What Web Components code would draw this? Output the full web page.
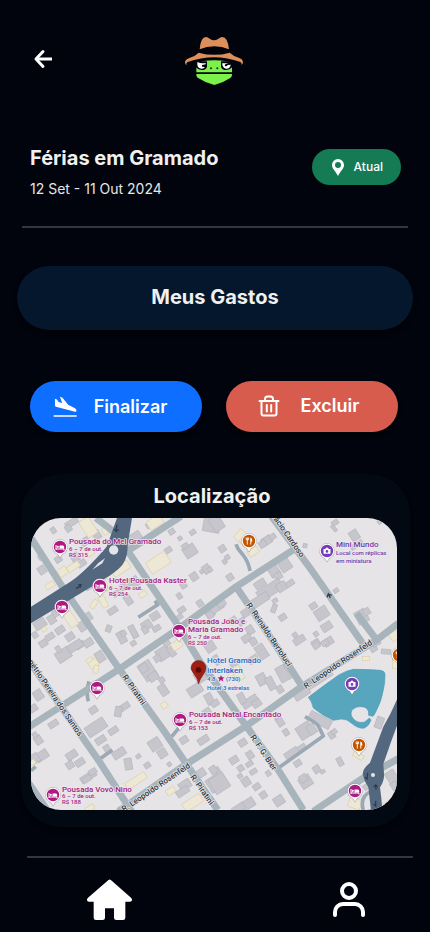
<!DOCTYPE html>
<html lang="pt-BR">
<head>
<meta charset="utf-8">
<meta name="viewport" content="width=device-width, initial-scale=1">
<title>Férias em Gramado</title>
<style>
  html, body { margin: 0; background: #01040d; }
  body { font-family: Inter, "Liberation Sans", sans-serif; color: #f0f0f0; }
</style>
</head>
<body>
<trip-page>
  <trip-header slot="header"></trip-header>
  <trip-summary>
    <span slot="title">Férias em Gramado</span>
    <span slot="dates">12 Set - 11 Out 2024</span>
    <status-badge slot="status">Atual</status-badge>
  </trip-summary>
  <wide-button>Meus Gastos</wide-button>
  <trip-actions>
    <action-button tone="primary">
      <svg slot="icon" width="24" height="24" viewBox="160 436 73 66" fill="#fff" aria-hidden="true"><path d="M166 444l6 2 5 8 11 3-7-19 8 3 17 21 21 11q6 4 4 9-2 3-7 1l-55-15-3-2zM162 494h70v5h-70z"/></svg>
      Finalizar
    </action-button>
    <action-button tone="danger">
      <svg slot="icon" width="24" height="24" viewBox="0 0 24 24" fill="none" stroke="#fff" stroke-width="2" stroke-linecap="round" stroke-linejoin="round" aria-hidden="true"><path d="M2.500 7h19M4.500 7v12.500a2 2 0 0 0 2 2h11a2 2 0 0 0 2-2V7M8 6.500V5a2.500 2.500 0 0 1 2.500-2.500h3A2.500 2.500 0 0 1 16 5v1.500M9.800 11v6.500M14.200 11v6.500"/></svg>
      Excluir
    </action-button>
  </trip-actions>
  <location-card>
    <span slot="title">Localização</span>
    <city-map></city-map>
  </location-card>
  <tab-bar slot="footer"></tab-bar>
</trip-page>

<script>
const define = (name, html, setup) => customElements.define(name, class extends HTMLElement {
  constructor() {
    super();
    const t = document.createElement('template');
    t.innerHTML = html;
    this.attachShadow({ mode: 'open' }).append(t.content.cloneNode(true));
    if (setup) setup(this.shadowRoot);
  }
});

define('trip-page', `
<style>
  :host { display: flex; flex-direction: column; min-height: 100vh; }
  main { display: flex; flex-direction: column; }
  footer { margin-top: auto; }
</style>
<slot name="header"></slot>
<main><slot></slot></main>
<footer><slot name="footer"></slot></footer>`);

define('trip-header', `
<style>
  :host { display: grid; grid-template-columns: 1fr auto 1fr; align-items: center; padding: 36px 32px 0 30px; }
  button { justify-self: start; display: flex; padding: 0 0 2px; border: 0; background: none; cursor: pointer; }
  svg { display: block; }
</style>
<button aria-label="Voltar">
  <svg width="26" height="26" viewBox="0 0 26 26" fill="none" stroke="#fff" stroke-width="3"><path d="M22 12H6" /><path d="M13 4.500L6 12l7 7.500" stroke-linejoin="round" stroke-linecap="round"/></svg>
</button>
<svg width="60" height="50" viewBox="6 6 180 150" role="img" aria-label="Sapo com chapéu">
  <path fill="#7cf04b" d="M60 82q36-6 74 0l16 20v13H43v-13z"/>
  <path fill="#7cf04b" d="M43 120h107q1 7-4 11-24 16-49 22-25-6-50-22-5-4-4-11z"/>
  <path fill="#01040d" d="M41 82h34v16q-3 10-16 10-15-1-18-12zM117 82h34v14q-3 11-18 12-13 0-16-10z"/>
  <path fill="#fff" d="M46 84q12 6 25 3v4l-11 2v5l9 1q-4 6-11 5-11-2-12-12zM146 84q-12 6-25 3v6q3 11 13 11 11-1 12-12l-9 1q-3 5-8 3-2-3 1-5z"/>
  <circle cx="87" cy="103" r="3" fill="#12310c"/><circle cx="106" cy="103" r="3" fill="#12310c"/>
  <path fill="#dc8f5b" d="M53 46Q56 9 72 9q6 0 11 5 7 5 13 5t13-5q6-5 12-5 16 0 20 37-21-9-44-9t-44 9z"/>
  <path fill="#dc8f5b" d="M9 82q4-8 13-10 16-4 28-16 47 13 93 0 13 12 29 16 10 3 11 12 1 5-5 9 3-6-3-9-78-28-158 0-6 3-3 9-6-3-5-11z"/>
</svg>`);

define('status-badge', `
<style>
  :host { display: flex; align-items: center; gap: 8px; height: 36px; padding: 0 18px; border-radius: 18px; background: #147b55; color: #fff; font-size: 12px; font-weight: 500; line-height: 16px; box-sizing: border-box; }
</style>
<svg width="16" height="18" viewBox="0 0 16 18" aria-hidden="true"><path fill="#fff" fill-rule="evenodd" d="M8 1a6 6 0 0 0-6 6c0 4 4 6.500 6 11 2-4.500 6-7 6-11a6 6 0 0 0-6-6zm0 3a3 3 0 1 1 0 6 3 3 0 0 1 0-6z"/></svg>
<slot></slot>`);

define('trip-summary', `
<style>
  :host { display: flex; justify-content: space-between; align-items: flex-start; margin: 58px 22px 0; padding: 0 7px 27px 8px; border-bottom: 2px solid #33363e; }
  h1 { margin: 0; font-size: 20px; line-height: 28px; font-weight: 700; }
  p { margin: 7px 0 0; font-size: 14px; line-height: 20px; font-weight: 400; color: #e6e6e6; }
  ::slotted(status-badge) { margin-top: 5px; }
</style>
<div><h1><slot name="title"></slot></h1><p><slot name="dates"></slot></p></div>
<slot name="status"></slot>`);

define('wide-button', `
<style>
  :host { display: block; margin: 38px 17px 0; }
  button { display: block; width: 100%; height: 64px; padding: 0 0 2px; border: 0; border-radius: 32px; background: #05172d; box-shadow: 0 4px 4px #0008; color: #f0f0f0; font: 700 20px/28px Inter, sans-serif; cursor: pointer; }
</style>
<button><slot></slot></button>`);

define('trip-actions', `
<style>
  :host { display: grid; grid-template-columns: 1fr 1fr; gap: 24px; margin: 51px 32px 0 30px; }
</style>
<slot></slot>`);

define('action-button', `
<style>
  :host { display: block; }
  button { display: flex; align-items: center; justify-content: center; gap: 17px; width: 100%; height: 51px; padding: 0 12px 0 0; border: 0; border-radius: 26px; background: #0d6eff; box-shadow: 0 4px 4px #0008; color: #fff; font: 600 18px/24px Inter, sans-serif; cursor: pointer; }
  :host([tone=danger]) button { background: #d85c4d; gap: 20px; padding: 0 8px 2px 0; }
</style>
<button><slot name="icon"></slot><span><slot></slot></span></button>`);

define('location-card', `
<style>
  :host { display: block; margin: 42px 20px 0 21px; padding: 8px 13px 17px 10px; border-radius: 40px; background: #020913; box-shadow: 0 4px 4px #0006; }
  h2 { margin: 0 0 8px; padding-right: 4px; text-align: center; font-size: 20px; line-height: 28px; font-weight: 700; }
</style>
<h2><slot name="title"></slot></h2>
<slot></slot>`);

define('tab-bar', `
<style>
  :host { display: block; margin: 0 17px 0 27px; border-top: 2px solid #33363e; }
  nav { display: flex; justify-content: space-between; align-items: center; padding: 20px 48px 10px 59px; }
  a { display: block; } svg { display: block; }
</style>
<nav>
  <a href="#inicio" aria-label="Início"><svg width="47" height="44" viewBox="258 114 141 132"><path fill="#fff" d="M322 123q7-9 14 0l57 50q4 4 3 8-1 4-6 4h-14v48q0 7-7 7h-20q-7 0-7-7v-28h-27v28q0 7-7 7h-20q-7 0-7-7v-48h-14q-5 0-6-4-1-4 3-8z"/></svg></a>
  <a href="#perfil" aria-label="Perfil"><svg width="32" height="36" viewBox="0 0 32 36" fill="none" stroke="#fff" stroke-width="4" stroke-linecap="round"><circle cx="16" cy="9" r="7"/><path d="M2 33v-3a8 8 0 0 1 8-8h12a8 8 0 0 1 8 8v3"/></svg></a>
</nav>`);

/* Buildings per map tile: centre x, centre y, width, height, optional angle. */
const TILES = [
  { at: [-33, -144], grey: [
    [100,181,14,18],[155,158,40,18],[145,175,18,20],[195,215,26,22],[340,205,50,26],[335,222,30,22],[388,165,20,16],[445,240,20,16],[455,185,18,16],[518,187,18,14],[480,205,12,12],[575,165,50,42,10],[510,243,38,34],[495,228,20,14],[560,297,22,26],[545,305,10,12],[522,320,22,24],[490,345,18,20],[478,378,14,18],[62,262,14,16],[66,300,22,24],[115,268,20,18],[165,262,24,26],[185,280,26,18],[230,195,22,26],[245,310,36,14],[205,350,20,18],[280,290,20,26],[318,345,40,20],[345,335,24,30],[325,390,20,30],[290,370,24,16],[278,422,30,18],[380,465,30,26],[405,438,28,22],[410,475,24,16],[375,480,16,22],[340,485,18,40,-28],[305,502,22,36,-28],[310,490,16,16],[266,476,16,20,20],[340,520,16,14],[420,395,14,16],[485,420,24,16],[480,440,16,14],[60,462,36,26],[95,448,22,26],[110,428,26,20],[120,480,28,20],[90,500,26,18],[70,520,24,20],[150,500,26,22],[185,470,20,28],[205,440,20,24],[45,495,16,18],[180,525,28,18],[570,430,26,22],[590,410,20,16],[540,400,18,20]],
    sand: [[205,172,34,56],[405,157,46,30],[255,184,14,20],[128,305,28,24],[160,290,40,18],[90,346,28,16],[303,296,56,26],[415,278,66,40],[260,345,26,30],[250,395,18,36,-28],[222,402,14,28,35],[368,373,22,16],[152,448,26,48],[72,478,14,12],[210,250,24,16]] },
  { at: [537, -144], grey: [
    [20,160,34,44],[170,212,30,24],[158,222,22,20],[188,200,18,16],[37,236,20,20],[52,262,14,14],[44,275,12,14],[0,298,12,16],[60,322,20,20],[375,158,20,14],[372,175,22,10,50],[433,196,26,30],[440,225,40,14],[515,152,26,12],[285,227,12,12,10],[378,362,16,12],[225,285,34,36],[190,300,30,40],[205,318,22,20],[150,342,34,22],[180,360,80,34],[150,390,56,26],[215,350,30,26],[240,340,26,16],[195,392,16,12],[192,415,14,26,20],[218,442,22,18],[310,408,22,18],[335,430,40,34],[350,470,32,24],[318,492,14,14],[318,520,24,22],[355,515,30,22],[268,510,36,20],[255,495,14,14],[455,440,34,40,-28],[470,425,20,20],[20,415,46,18],[35,402,26,16],[0,435,20,20],[105,430,20,22],[95,455,22,20],[120,480,22,26],[110,505,28,22],[70,450,20,18],[130,515,20,22],[10,400,18,16]],
    sand: [[95,200,36,34,38],[130,245,32,20],[105,215,24,26],[553,498,26,26]] },
  { at: [-33, 366], grey: [
    [130,45,44,34],[165,18,46,24],[205,8,28,22],[240,50,24,32],[115,28,14,20],[430,40,40,36],[412,55,20,20],[455,35,18,30],[440,10,20,18],[383,92,40,56],[370,85,26,24],[400,110,30,24],[430,150,24,34],[425,120,16,16],[310,202,40,18],[295,215,20,30,10],[220,210,24,20],[228,262,64,34],[280,272,30,18],[242,300,32,20],[262,328,18,26],[297,340,40,24],[325,372,22,34,-10],[355,349,14,12],[382,376,18,16],[155,345,34,22],[150,375,22,22],[180,367,28,20],[205,410,50,20],[218,395,24,16],[200,418,28,16],[100,252,30,18],[55,165,26,30],[40,205,24,20],[55,300,22,26],[45,285,14,16],[65,347,40,26],[45,355,24,28],[405,313,36,34],[427,340,26,26],[448,373,12,12],[492,300,24,20],[550,300,34,20],[568,177,22,34,-28],[525,150,44,30],[540,110,30,34],[545,398,22,24],[495,435,36,26],[488,455,40,20],[585,430,44,44],[595,395,14,30],[570,20,30,30],[560,215,24,18]],
    sand: [[220,70,28,24],[228,88,14,24,10],[208,60,20,12],[470,15,32,24],[433,196,18,18],[348,422,68,22],[452,453,28,18],[518,488,62,28],[210,505,26,16],[38,367,16,14]] },
  { at: [537, 366], grey: [
    [220,100,34,48,-28],[235,80,22,24],[155,35,28,44],[130,58,30,20],[155,118,28,34,-28],[182,130,22,40,-28],[210,148,18,22],[120,185,50,24],[95,175,20,32,-28],[140,190,26,22],[75,78,20,26],[318,16,20,20],[345,8,22,16],[275,160,50,26],[330,120,84,16],[330,240,70,28,28],[365,285,18,22],[372,275,16,14],[285,272,46,42],[305,268,24,30],[270,325,36,14],[245,340,44,22],[263,370,22,18],[210,245,20,28],[228,277,16,20],[200,230,14,14],[98,308,24,20],[72,360,26,20],[120,345,20,24],[118,372,22,14],[92,385,18,18],[130,395,22,14],[108,425,24,26],[90,408,14,12],[28,430,50,50],[160,465,20,20],[207,482,30,28],[110,495,50,28],[85,505,40,20],[10,390,20,24],[140,440,22,18],[287,425,36,34],[280,415,22,22],[320,388,20,22],[338,395,14,10],[390,365,16,26,-28],[508,248,22,34,20],[528,35,28,14,5],[490,25,20,20],[500,10,24,14],[545,410,30,36],[555,440,20,30],[470,440,20,16],[20,60,18,30],[15,190,24,18],[175,400,14,16]],
    sand: [[84,100,26,44,-28],[60,95,20,26],[468,56,22,12,0],[555,70,14,30,0],[445,347,32,16,30],[435,490,38,30,20],[525,500,24,14,20]] }
];

/* Map pins: kind, x, y. */
const PINS = [
  ['bed',29,29],['bed',69,68],['bed',31,89],['bed',148,113],['bed',66,170],['bed',149,202],['bed',22,277],['bed',324,273],
  ['food',218,23],['food',328,227],['food',368,137],['sight',296,33],['sight',321,166]
];
const PIN = {
  bed: ['#ad1a82', '<path d="M-4-2v5M-4 2h8M4 2v1.500" stroke="#fff" fill="none"/><path d="M-.5-1.500H3Q4.200-1.500 4.200 0v1.500H-.5z" fill="#fff"/><circle cx="-2.200" cy="-.2" r="1.100" fill="#fff"/>'],
  food: ['#c45500', '<path d="M-2.800-3.500v2.300M-1.700-3.500v7M-.6-3.500v2.300M-2.800-1.300h2.200" stroke="#fff" stroke-width=".9" fill="none"/><path d="M1.300-3.500q2.200.5 2 4H2.300v3h-1z" fill="#fff"/>'],
  sight: ['#763bb8', '<path d="M-3.500-2h1.800l.7-1.200h2l.7 1.200h1.800v4.800h-7z" fill="#fff"/><circle cy=".4" r="1.300" fill="#763bb8"/>']
};

define('city-map', `
<style>
  :host { display: block; overflow: hidden; border-radius: 30px; background: #e6e4e6; }
  svg { display: block; width: 100%; height: auto; }
  text { font-family: Roboto, sans-serif; font-weight: 500; font-size: 8px; paint-order: stroke; stroke: #ebe9ec; stroke-width: 1.500px; stroke-linejoin: round; }
  .hotel { fill: #a61c80; }
  .sub { font-size: 6px; }
  .sight { fill: #6f3bab; }
  .stay { fill: #1f68c4; }
  .street { fill: #29363f; }
</style>
<svg viewBox="0 0 366 292" role="img" aria-label="Mapa de Gramado">
  <g transform="scale(.33333)">
    <g id="blocks"></g>
    <g fill="none" stroke="#9ba9b5" stroke-width="11" stroke-linejoin="round">
      <path d="M322 298l58-38-8-12M172 550q-8-30 2-60M202 726l42-30M422 656l28-34M615 79q4 14 18 28 20 24 24 52M822 596q40 22 41 30l14 28-135 96M0 758l14-12M997 876q-12-40 22-55"/>
    </g>
    <g fill="none" stroke="#a8b4bc" stroke-width="21" stroke-linejoin="round">
      <path d="M0 60l97 151 170 245 130 180 163 240"/>
      <path d="M292 101l145 215 68 112 142 198 95 130 75 120"/>
      <path d="M-5 626l272-174 170-116 180-131 177-114M287 101L450-5M195 0l65 50"/>
      <path d="M612 201l125 185 77 120"/>
      <path d="M262 880l200-139 185-118 165-117 225-140 65-50M1037 366l-60-80"/>
      <path d="M722-5l115 155 165 236"/>
      <path d="M-5 430l207 296 100 155M-5 798l55 80M847 880l150-100 105-58"/>
    </g>
    <path fill="#53677f" d="M258 0h45l-13 80q1 35-14 58-8 13-40 35L0 316v-50l117-74q45-30 110-106z"/>
    <path fill="#e6e4e6" d="M184 155l18-20 20-14-8 15z"/><circle cx="248" cy="96" r="14" fill="#e2e5e7"/>
    <path fill="#53677f" d="M1100 540q-20 48-43 86l-40 108q-22 18-22 34 4 22 17 40l8 70h34q-2-36-7-70 14-20 12-42l-2-28 25-72 18-48z"/>
    <circle cx="1026" cy="771" r="6" fill="#e6e4e6"/>
    <g fill="none" stroke="#2f3d50" stroke-width="4"><path d="M258 20l-3 20-6-7M255 40l8-5M135 212l14-9M142 200h8l-3 9M1010 765l-2 18-6-6M1035 815l-1-14-6 6M1034 801l6 6M1034 848l0 16-6-6M898 240l-6-12-4 10M892 228l10 4"/></g>
    <path fill="#58a5be" stroke="#4b9ab4" stroke-width="2" stroke-linejoin="round" d="M832 538q44-34 90-66 22-14 45-18 45 0 80 3 16 2 15 14 0 24-5 45-6 36-24 68-4 10-8 11l-12-3q2-26-22-26-14-2-26 8-10 12 0 26 14 18 36 12 10-7 14-12l5 6q-6 18-20 24-16 4-38-14-14-14-32-13l-23 4q-32-14-60-37-4-20-15-32z"/>
  </g>
  <g class="street">
    <text transform="translate(241 -1) rotate(55)">rácio Cardoso</text>
    <text transform="translate(215 87) rotate(56)">R. Reinaldo Bertoluci</text>
    <text transform="translate(-3 144) rotate(56)">nétrio Pereira dos Santos</text>
    <text transform="translate(91 159) rotate(55)">R. Piratini</text>
    <text transform="translate(159 259) rotate(55)">R. Piratini</text>
    <text transform="translate(219 219) rotate(56)">R. F. G. Bier</text>
    <text transform="translate(93 294) rotate(-34)">R. Leopoldo Rosenfeld</text>
    <text transform="translate(275 171) rotate(-34)">R. Leopoldo Rosenfeld</text>
  </g>
  <g id="pins"></g>
  <path fill="#9e1f14" stroke="#7d160e" stroke-width=".5" d="M167.500 166q-1-6-4.500-10-3-4-3-6a7.500 7.500 0 0 1 15 0q0 3-3 7-3 4-4.500 9z"/><circle cx="167.500" cy="152" r="2.800" fill="#5e0705"/>
  <g class="hotel">
    <text x="38" y="26">Pousada do Mel Gramado</text><text class="sub" x="38" y="33">6 – 7 de out.</text><text class="sub" x="38" y="39">R$ 315</text>
    <text x="78" y="65">Hotel Pousada Kaster</text><text class="sub" x="78" y="72">6 – 7 de out.</text><text class="sub" x="78" y="78">R$ 254</text>
    <text x="157" y="106">Pousada João e</text><text x="157" y="114">Maria Gramado</text><text class="sub" x="157" y="121">6 – 7 de out.</text><text class="sub" x="157" y="127">R$ 250</text>
    <text x="158" y="199">Pousada Natal Encantado</text><text class="sub" x="158" y="206">6 – 7 de out.</text><text class="sub" x="158" y="212">R$ 153</text>
    <text x="31" y="274">Pousada Vovô Nino</text><text class="sub" x="31" y="280">6 – 7 de out.</text><text class="sub" x="31" y="286">R$ 188</text>
  </g>
  <g class="sight"><text x="305" y="29">Mini Mundo</text><text class="sub" x="305" y="37">Local com réplicas</text><text class="sub" x="305" y="45">em miniatura</text></g>
  <g class="stay"><text x="176" y="145">Hotel Gramado</text><text x="176" y="155">Interlaken</text><text class="sub" x="176" y="163">4.8</text><text class="sub" x="195" y="163">(730)</text><text class="sub" x="176" y="172">Hotel 3 estrelas</text></g>
  <path fill="#ad1a82" d="M190 157l1 2.200 2.500.2-1.900 1.600.6 2.400-2.200-1.300-2.200 1.300.6-2.400-1.900-1.600 2.500-.2z"/>
</svg>`, root => {
  const block = (fill, stroke) => ([x, y, w, h, a = -33]) =>
    `<rect x="${-w / 2}" y="${-h / 2}" width="${w}" height="${h}" transform="translate(${x} ${y}) rotate(${a})" fill="${fill}" stroke="${stroke}" stroke-width="2"/>`;
  root.getElementById('blocks').innerHTML = TILES.map(t =>
    `<g transform="translate(${t.at})">${t.grey.map(block('#c6c6cc', '#b4b6be')).join('')}${t.sand.map(block('#ede7d5', '#dccfa6')).join('')}</g>`).join('');
  root.getElementById('pins').innerHTML = PINS.map(([kind, x, y]) =>
    `<g transform="translate(${x} ${y})"><path d="M0 11.500Q-1.500 8-5 6a7.800 7.800 0 1 1 10 0Q1.500 8 0 11.500z" fill="#777" opacity=".5"/><path d="M0 10.500Q-1.500 7-4.500 5.700a7.300 7.300 0 1 1 9 0Q1.500 7 0 10.500z" fill="#fff"/><circle r="6.200" fill="${PIN[kind][0]}"/>${PIN[kind][1]}</g>`).join('');
});
</script>
</body>
</html>
